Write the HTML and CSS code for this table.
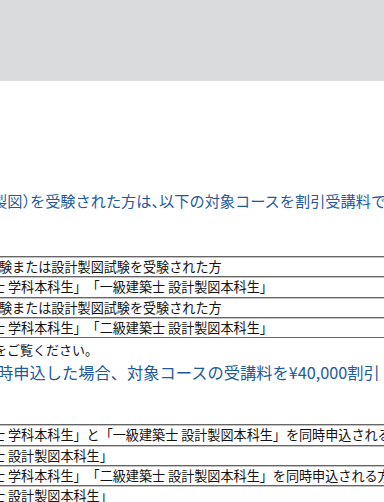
FILE: index.html
```html
<!DOCTYPE html>
<html lang="ja">
<head>
<meta charset="utf-8">
<link rel="stylesheet" href="styles.css">
</head>
<body>
<div class="band"></div>
<div class="content">
  <h2 class="lead lead-a">製図<span class="half">）</span>を受験された方は<span class="half">、</span>以下の対象コースを割引受講料で</h2>
  <div class="table table-a">
    <div class="row"><span class="cell cut-s">験または設計製図試験を受験された方</span></div>
    <div class="row"><span class="cell cut-l">士 学科本科生」「一級建築士 設計製図本科生」</span></div>
    <div class="row"><span class="cell cut-s">験または設計製図試験を受験された方</span></div>
    <div class="row"><span class="cell cut-l">士 学科本科生」「二級建築士 設計製図本科生」</span></div>
  </div>
  <p class="note">をご覧ください。</p>
  <h2 class="lead lead-b">時申込した場合、対象コースの受講料を¥40,000割引</h2>
  <div class="table table-b">
    <div class="row"><span class="cell cut-l">士 学科本科生」と「一級建築士 設計製図本科生」を同時申込される方</span></div>
    <div class="row"><span class="cell cut-l">士 設計製図本科生」</span></div>
    <div class="row"><span class="cell cut-l">士 学科本科生」「二級建築士 設計製図本科生」を同時申込される方</span></div>
    <div class="row"><span class="cell cut-l">士 設計製図本科生」</span></div>
  </div>
</div>
</body>
</html>
```

FILE: styles.css
```css
html, body {
  margin: 0;
  padding: 0;
  background: #ffffff;
  overflow: hidden;
}
body {
  width: 384px;
  height: 502px;
  font-family: "Noto Sans CJK JP", "Noto Sans", sans-serif;
  color: #111;
  text-spacing-trim: space-all;
}
.band {
  height: 81px;
  background: #dadbdd;
}
.content {
  width: 384px;
  overflow: hidden;
}
.lead {
  margin: 0;
  font-weight: normal;
  line-height: 24px;
  color: #1f5a9e;
  white-space: nowrap;
}
.half {
  font-feature-settings: "halt";
}
.lead-a {
  margin-top: 107px;
  font-size: 15.2px;
  text-indent: -8px;
}
.lead-b {
  font-size: 16.25px;
  text-indent: -3px;
}
.table {
  width: 384px;
  border-bottom: 1px solid #666;
}
.table-a {
  margin-top: 44px;
}
.table-b {
  margin-top: 40px;
}
.row {
  height: 19.33px;
  border-top: 1px solid #666;
  box-shadow: inset 0 1px 0 #c4c4c4;
  display: flex;
  align-items: center;
  overflow: hidden;
}
.cell {
  font-size: 13.1px;
  line-height: 19px;
  white-space: nowrap;
}
.cut-s {
  margin-left: -1px;
}
.cut-l {
  margin-left: -8px;
}
.note {
  margin: 2px 0 0;
  font-size: 13px;
  line-height: 20px;
  text-indent: -6px;
  white-space: nowrap;
}
```
